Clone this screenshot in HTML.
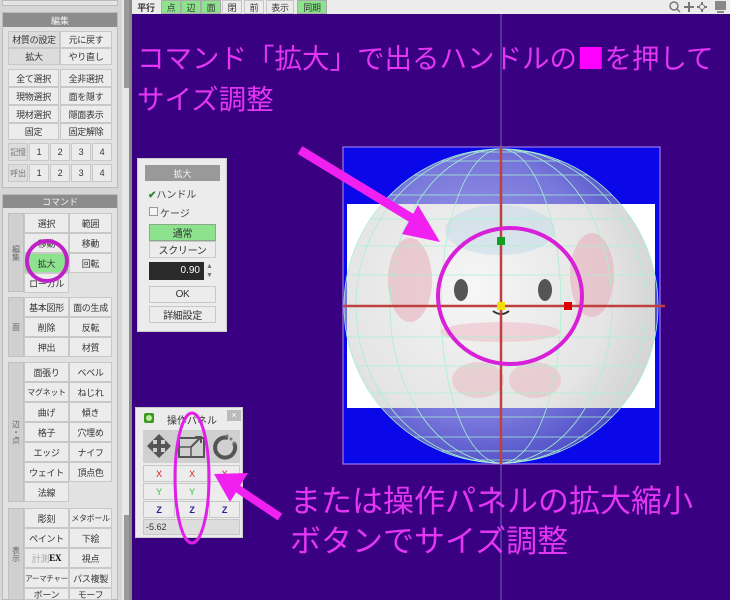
<!DOCTYPE html>
<html><head><meta charset="utf-8"><style>
*{margin:0;padding:0;box-sizing:border-box}
body{width:730px;height:600px;overflow:hidden;background:#3a0082;position:relative;font-family:"Liberation Sans","Noto Sans CJK JP",sans-serif;font-size:9px;color:#333}
.a{position:absolute}
.b{position:absolute;background:#ececec;border:1px solid #c8c8c8;text-align:center;font-size:9px;color:#333;display:flex;align-items:center;justify-content:center;white-space:nowrap;overflow:hidden;letter-spacing:-0.3px}
.g{background:#8de28d}
.hd{position:absolute;background:#8c8c8c;color:#f4f4f4;text-align:center;font-size:9px;display:flex;align-items:center;justify-content:center}
.lbl{position:absolute;background:#d0d0d0;border:1px solid #c0c0c0;font-size:8px;color:#666;display:flex;align-items:center;justify-content:center;writing-mode:vertical-rl}
.mg{position:absolute;color:#e236f2;font-family:"Noto Sans CJK JP",sans-serif;white-space:nowrap;line-height:1}
</style></head><body>
<div class="a" style="left:0;top:0;width:122px;height:600px;background:#d6d6d6"></div>
<div class="a" style="left:2px;top:0;width:116px;height:6px;background:#e4e4e4;border:1px solid #bbb"></div>
<div class="a" style="left:122px;top:0;width:9px;height:600px;background:#e8e8e8"></div>
<div class="a" style="left:124px;top:0;width:5px;height:88px;background:#9a9a9a"></div>
<div class="a" style="left:124px;top:515px;width:5px;height:85px;background:#9a9a9a"></div>
<div class="a" style="left:129px;top:0;width:3px;height:600px;background:#8a8a8a"></div>
<div class="a" style="left:2px;top:12px;width:116px;height:176px;background:#e2e2e2;border:1px solid #bbb"></div>
<div class="hd" style="left:3px;top:13px;width:114px;height:14px">編集</div>
<div class="b" style="left:8px;top:31px;width:52px;height:17px;background:#dcdcdc">材質の設定</div>
<div class="b" style="left:60px;top:31px;width:52px;height:17px">元に戻す</div>
<div class="b" style="left:8px;top:48px;width:52px;height:17px;background:#dcdcdc">拡大</div>
<div class="b" style="left:60px;top:48px;width:52px;height:17px">やり直し</div>
<div class="b" style="left:8px;top:69px;width:51px;height:18px">全て選択</div>
<div class="b" style="left:60px;top:69px;width:52px;height:18px">全非選択</div>
<div class="b" style="left:8px;top:87px;width:51px;height:18px">現物選択</div>
<div class="b" style="left:60px;top:87px;width:52px;height:18px">面を隠す</div>
<div class="b" style="left:8px;top:105px;width:51px;height:18px">現材選択</div>
<div class="b" style="left:60px;top:105px;width:52px;height:18px">隠面表示</div>
<div class="b" style="left:8px;top:123px;width:51px;height:17px">固定</div>
<div class="b" style="left:60px;top:123px;width:52px;height:17px">固定解除</div>
<div class="b" style="left:8px;top:143px;width:20px;height:18px;background:#ddd;color:#777;font-size:8px">記憶</div>
<div class="b" style="left:29px;top:143px;width:20px;height:18px">1</div>
<div class="b" style="left:50px;top:143px;width:20px;height:18px">2</div>
<div class="b" style="left:71px;top:143px;width:20px;height:18px">3</div>
<div class="b" style="left:92px;top:143px;width:20px;height:18px">4</div>
<div class="b" style="left:8px;top:164px;width:20px;height:18px;background:#ddd;color:#777;font-size:8px">呼出</div>
<div class="b" style="left:29px;top:164px;width:20px;height:18px">1</div>
<div class="b" style="left:50px;top:164px;width:20px;height:18px">2</div>
<div class="b" style="left:71px;top:164px;width:20px;height:18px">3</div>
<div class="b" style="left:92px;top:164px;width:20px;height:18px">4</div>

<div class="a" style="left:2px;top:194px;width:116px;height:406px;background:#e2e2e2;border:1px solid #bbb"></div>
<div class="hd" style="left:3px;top:195px;width:114px;height:13px">コマンド</div>
<div class="lbl" style="left:8px;top:213px;width:16px;height:79px">編集</div>
<div class="b" style="left:24px;top:213px;width:45px;height:20px">選択</div>
<div class="b" style="left:69px;top:213px;width:43px;height:20px">範囲</div>
<div class="b" style="left:24px;top:233px;width:45px;height:20px">移動</div>
<div class="b" style="left:69px;top:233px;width:43px;height:20px">移動</div>
<div class="b g" style="left:24px;top:253px;width:45px;height:20px">拡大</div>
<div class="b" style="left:69px;top:253px;width:43px;height:20px">回転</div>
<div class="b" style="left:24px;top:273px;width:45px;height:20px">ローカル</div>
<div class="lbl" style="left:8px;top:297px;width:16px;height:60px">面</div>
<div class="b" style="left:24px;top:297px;width:45px;height:20px">基本図形</div>
<div class="b" style="left:69px;top:297px;width:43px;height:20px">面の生成</div>
<div class="b" style="left:24px;top:317px;width:45px;height:20px">削除</div>
<div class="b" style="left:69px;top:317px;width:43px;height:20px">反転</div>
<div class="b" style="left:24px;top:337px;width:45px;height:20px">押出</div>
<div class="b" style="left:69px;top:337px;width:43px;height:20px">材質</div>
<div class="lbl" style="left:8px;top:362px;width:16px;height:140px">辺・点</div>
<div class="b" style="left:24px;top:362px;width:45px;height:20px">面張り</div>
<div class="b" style="left:69px;top:362px;width:43px;height:20px">ベベル</div>
<div class="b" style="left:24px;top:382px;width:45px;height:20px;font-size:8px">マグネット</div>
<div class="b" style="left:69px;top:382px;width:43px;height:20px">ねじれ</div>
<div class="b" style="left:24px;top:402px;width:45px;height:20px">曲げ</div>
<div class="b" style="left:69px;top:402px;width:43px;height:20px">傾き</div>
<div class="b" style="left:24px;top:422px;width:45px;height:20px">格子</div>
<div class="b" style="left:69px;top:422px;width:43px;height:20px">穴埋め</div>
<div class="b" style="left:24px;top:442px;width:45px;height:20px">エッジ</div>
<div class="b" style="left:69px;top:442px;width:43px;height:20px">ナイフ</div>
<div class="b" style="left:24px;top:462px;width:45px;height:20px">ウェイト</div>
<div class="b" style="left:69px;top:462px;width:43px;height:20px">頂点色</div>
<div class="b" style="left:24px;top:482px;width:45px;height:20px">法線</div>
<div class="lbl" style="left:8px;top:508px;width:16px;height:92px">表示</div>
<div class="b" style="left:24px;top:508px;width:45px;height:20px">彫刻</div>
<div class="b" style="left:69px;top:508px;width:43px;height:20px;font-size:8px">メタボール</div>
<div class="b" style="left:24px;top:528px;width:45px;height:20px">ペイント</div>
<div class="b" style="left:69px;top:528px;width:43px;height:20px">下絵</div>
<div class="b" style="left:24px;top:548px;width:45px;height:20px"><span style="color:#aaa">計測</span><b style="font-family:'Liberation Serif';color:#000">EX</b></div>
<div class="b" style="left:69px;top:548px;width:43px;height:20px">視点</div>
<div class="b" style="left:24px;top:568px;width:45px;height:20px;font-size:7.5px">アーマチャー</div>
<div class="b" style="left:69px;top:568px;width:43px;height:20px">パス複製</div>
<div class="b" style="left:24px;top:588px;width:45px;height:12px">ボーン</div>
<div class="b" style="left:69px;top:588px;width:43px;height:12px">モーフ</div>

<div class="a" style="left:132px;top:0;width:598px;height:14px;background:#ececec"></div>
<div class="b" style="left:133px;top:0;width:26px;height:14px;border:none;font-weight:bold">平行</div>
<div class="b g" style="left:161px;top:0;width:20px;height:14px;border-color:#aaa">点</div>
<div class="b g" style="left:181px;top:0;width:20px;height:14px;border-color:#aaa">辺</div>
<div class="b g" style="left:201px;top:0;width:20px;height:14px;border-color:#aaa">面</div>
<div class="b" style="left:222px;top:0;width:20px;height:14px">閉</div>
<div class="b" style="left:244px;top:0;width:20px;height:14px">前</div>
<div class="b" style="left:266px;top:0;width:28px;height:14px">表示</div>
<div class="b g" style="left:297px;top:0;width:30px;height:14px;border-color:#aaa">同期</div>
<svg class="a" style="left:668px;top:0" width="62" height="14">
<circle cx="6" cy="6" r="4" fill="none" stroke="#777" stroke-width="1.5"/><line x1="9" y1="9" x2="12" y2="12" stroke="#777" stroke-width="1.5"/>
<path d="M16 7h10M21 2v10" stroke="#777" stroke-width="2"/>
<path d="M29 7h10M34 2v10" stroke="#777" stroke-width="2"/><circle cx="34" cy="7" r="2.5" fill="#eee" stroke="#777"/>
<rect x="47" y="1" width="11" height="9" fill="#888"/><rect x="49" y="11" width="7" height="2" fill="#888"/>
</svg>

<svg class="a" style="left:0;top:0" width="730" height="600">
<defs>
<radialGradient id="sg" cx="0.42" cy="0.45" r="0.6">
<stop offset="0" stop-color="#f4f4f4" stop-opacity="0.7"/>
<stop offset="0.7" stop-color="#d0d0d0" stop-opacity="0.55"/>
<stop offset="1" stop-color="#a0a0a0" stop-opacity="0.45"/>
</radialGradient>
</defs>
<line x1="501" y1="14" x2="501" y2="600" stroke="#6a6ab0" stroke-width="1"/>
<rect x="343" y="147" width="317" height="317" fill="#0a08e8"/>
<rect x="347" y="204" width="308" height="204" fill="#fff"/>
<circle cx="501" cy="306" r="157" fill="url(#sg)"/>
<g opacity="0.45">
<ellipse cx="410" cy="280" rx="22" ry="42" fill="#e8a0b0"/>
<ellipse cx="592" cy="275" rx="22" ry="42" fill="#e8a0b0"/>
<ellipse cx="500" cy="230" rx="55" ry="25" fill="#bcd8e8"/>
<ellipse cx="478" cy="380" rx="26" ry="18" fill="#e8b0b8"/>
<ellipse cx="535" cy="380" rx="26" ry="18" fill="#e8b0b8"/>
<ellipse cx="500" cy="332" rx="60" ry="10" fill="#f0b0c0"/>
</g>
<ellipse cx="461" cy="290" rx="7" ry="11" fill="#555"/>
<ellipse cx="545" cy="290" rx="7" ry="11" fill="#555"/>
<path d="M493 311 q8 6 16 0" stroke="#333" stroke-width="2" fill="none"/>
<g fill="none" stroke="#a8f0d0" stroke-width="0.8">
<circle cx="501" cy="306" r="157"/>
<ellipse cx="501" cy="306" rx="145" ry="157"/>
<ellipse cx="501" cy="306" rx="111" ry="157"/>
<ellipse cx="501" cy="306" rx="60" ry="157"/>
<line x1="470" y1="152" x2="532" y2="152"/>
<line x1="441" y1="161" x2="561" y2="161"/>
<line x1="414" y1="175" x2="588" y2="175"/>
<line x1="390" y1="195" x2="612" y2="195"/>
<line x1="370" y1="219" x2="632" y2="219"/>
<line x1="356" y1="246" x2="646" y2="246"/>
<line x1="347" y1="275" x2="655" y2="275"/>
<line x1="347" y1="337" x2="655" y2="337"/>
<line x1="356" y1="366" x2="646" y2="366"/>
<line x1="370" y1="393" x2="632" y2="393"/>
<line x1="390" y1="417" x2="612" y2="417"/>
<line x1="414" y1="437" x2="588" y2="437"/>
<line x1="441" y1="451" x2="561" y2="451"/>
<line x1="470" y1="460" x2="532" y2="460"/>
</g>
<rect x="343" y="147" width="317" height="317" fill="none" stroke="#b090ff" stroke-width="1"/>
<line x1="501" y1="147" x2="501" y2="464" stroke="#c04040" stroke-width="2.5"/>
<line x1="343" y1="306" x2="665" y2="306" stroke="#c04040" stroke-width="2.5"/>
<rect x="497" y="237" width="8" height="8" fill="#10a020"/>
<rect x="497" y="302" width="8" height="8" fill="#f0e000"/>
<rect x="564" y="302" width="8" height="8" fill="#e00000"/>
<ellipse cx="510" cy="296" rx="72" ry="68" fill="none" stroke="#d820d8" stroke-width="4"/>
<path d="M300 150 L418 222" stroke="#f020f0" stroke-width="9"/>
<path d="M440 242 L418 205 L402 234 Z" fill="#f020f0"/>
</svg>

<div class="a" style="left:137px;top:158px;width:90px;height:174px;background:#ececec;border:1px solid #ccc"></div>
<div class="hd" style="left:145px;top:165px;width:75px;height:16px;background:#999">拡大</div>
<div class="a" style="left:148px;top:186px;font-size:10px;color:#444"><span style="color:#2a8a2a;font-weight:bold">✔</span>ハンドル</div>
<div class="a" style="left:149px;top:207px;width:9px;height:9px;border:1px solid #999;background:#f4f4f4"></div>
<div class="a" style="left:160px;top:205px;font-size:10px;color:#444">ケージ</div>
<div class="b g" style="left:149px;top:224px;width:67px;height:17px;font-size:10px;border-color:#8a8">通常</div>
<div class="b" style="left:149px;top:241px;width:67px;height:17px;font-size:10px">スクリーン</div>
<div class="a" style="left:149px;top:262px;width:55px;height:18px;background:#2a2a2a;color:#fff;font-size:10px;text-align:right;padding:3px 4px 0 0">0.90</div>
<div class="a" style="left:206px;top:262px;font-size:7px;color:#777;line-height:9px">▲<br>▼</div>
<div class="b" style="left:149px;top:286px;width:67px;height:17px;font-size:10px">OK</div>
<div class="b" style="left:149px;top:306px;width:67px;height:17px;font-size:10px">詳細設定</div>

<div class="a" style="left:135px;top:407px;width:108px;height:131px;background:#ececec;border:1px solid #ccc"></div>
<div class="a" style="left:144px;top:413px;width:10px;height:10px;background:#3a9a20;border-radius:2px"><div style="margin:2px;width:6px;height:6px;border-radius:50%;background:#bfe8a0"></div></div>
<div class="a" style="left:167px;top:412px;font-size:10px;color:#333">操作パネル</div>
<div class="a" style="left:227px;top:410px;width:14px;height:11px;background:#bbb;color:#fff;font-size:9px;text-align:center;line-height:11px">×</div>
<div class="a" style="left:143px;top:430px;width:97px;height:33px;background:#d0d0d0"></div>
<svg class="a" style="left:143px;top:430px" width="97" height="33">
<g fill="#555"><path d="M16 4 l6 6 h-4 v4 h4 v-4 l6 6 -6 6 v-4 h-4 v4 h4 l-6 6 -6 -6 h4 v-4 h-4 v4 l-6 -6 6 -6 v4 h4 v-4 h-4 z"/></g>
<rect x="36" y="8" width="25" height="19" fill="none" stroke="#555" stroke-width="2"/>
<path d="M48 17 l10 -10 M52 7h6v6" stroke="#555" stroke-width="2" fill="none"/>
<path d="M48 17 v10 M36 17 h12" stroke="#555" stroke-width="1.5"/>
<path d="M85 8 a10 10 0 1 0 6 5" stroke="#555" stroke-width="4" fill="none"/>
<circle cx="88" cy="9" r="1.5" fill="#777"/><circle cx="91" cy="13" r="1.5" fill="#777"/><circle cx="84" cy="6" r="1.5" fill="#777"/>
</svg>
<div class="b" style="left:143px;top:465px;width:32px;height:17px;color:#d02020">X</div>
<div class="b" style="left:176px;top:465px;width:32px;height:17px;color:#d02020">X</div>
<div class="b" style="left:209px;top:465px;width:31px;height:17px;color:#d02020">X</div>
<div class="b" style="left:143px;top:483px;width:32px;height:17px;color:#30c030">Y</div>
<div class="b" style="left:176px;top:483px;width:32px;height:17px;color:#30c030">Y</div>
<div class="b" style="left:143px;top:501px;width:32px;height:17px;color:#202090;font-weight:bold">Z</div>
<div class="b" style="left:176px;top:501px;width:32px;height:17px;color:#202090;font-weight:bold">Z</div>
<div class="b" style="left:209px;top:501px;width:31px;height:17px;color:#202090;font-weight:bold">Z</div>
<div class="a" style="left:143px;top:519px;width:97px;height:16px;background:#ddd;border:1px solid #c8c8c8;font-size:9px;padding:2px 0 0 2px">-5.62</div>

<svg class="a" style="left:0;top:0" width="730" height="600">
<circle cx="47" cy="261" r="20" fill="none" stroke="#c020c8" stroke-width="4"/>
<ellipse cx="192" cy="478" rx="17" ry="65" fill="none" stroke="#e020e8" stroke-width="3"/>
<path d="M280 517 L232 485" stroke="#f020f0" stroke-width="8"/>
<path d="M214 474 L248 473 L230 502 Z" fill="#f020f0"/>
</svg>

<div class="mg" style="left:137px;top:43px;font-size:27.5px">コマンド「拡大」で出るハンドルの<span style="color:#ff00ff">■</span>を押して</div>
<div class="mg" style="left:137px;top:84px;font-size:27.5px">サイズ調整</div>
<div class="mg" style="left:290px;top:483px;font-size:31px">または操作パネルの拡大縮小</div>
<div class="mg" style="left:290px;top:523px;font-size:31px">ボタンでサイズ調整</div>
</body></html>
